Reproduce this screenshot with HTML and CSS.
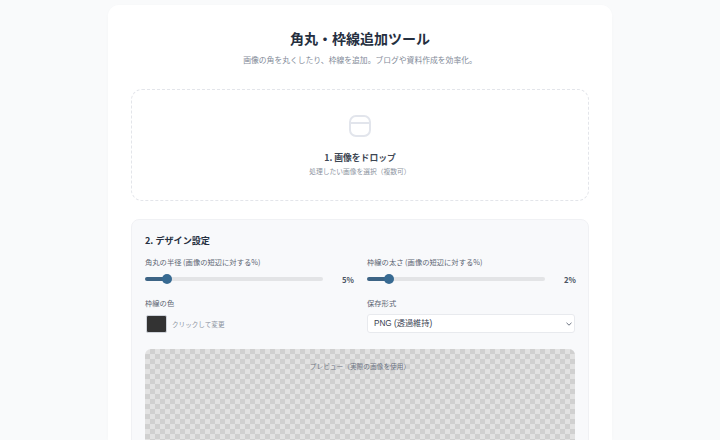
FILE: index.html
```html
<!DOCTYPE html>
<html lang="ja">
<head>
<meta charset="utf-8">
<title>角丸・枠線追加ツール</title>
<link rel="stylesheet" href="styles.css">
</head>
<body>
<main class="card">
  <header class="head">
    <h1 class="title">角丸・枠線追加ツール</h1>
    <p class="subtitle">画像の角を丸くしたり、枠線を追加。ブログや資料作成を効率化。</p>
  </header>
  <section class="drop">
    <svg class="drop-icon" width="24" height="24" viewBox="0 0 24 24" fill="none" stroke="#e2e5ec" stroke-width="2">
      <rect x="2" y="2" width="20" height="20" rx="6"/>
      <path d="M2 9h20"/>
    </svg>
    <h2 class="drop-title">1. 画像をドロップ</h2>
    <p class="drop-sub">処理したい画像を選択（複数可）</p>
  </section>
  <section class="panel">
    <h2 class="panel-title">2. デザイン設定</h2>
    <div class="grid">
      <div class="field">
        <label class="label">角丸の半径 (画像の短辺に対する%)</label>
        <div class="slider-row">
          <input class="range" type="range" min="0" max="50" value="5">
          <span class="value">5%</span>
        </div>
      </div>
      <div class="field">
        <label class="label">枠線の太さ (画像の短辺に対する%)</label>
        <div class="slider-row">
          <input class="range" type="range" min="0" max="20" value="2">
          <span class="value">2%</span>
        </div>
      </div>
      <div class="field">
        <label class="label">枠線の色</label>
        <div class="color-row">
          <span class="swatch"></span>
          <span class="hint">クリックして変更</span>
        </div>
      </div>
      <div class="field">
        <label class="label">保存形式</label>
        <div class="select-wrap">
          <select class="select"><option>PNG (透過維持)</option></select>
          <svg class="chevron" width="6" height="4" viewBox="0 0 6 4" fill="none" stroke="#6b7280" stroke-width="1"><path d="M.5.8 3 3.2 5.5.8"/></svg>
        </div>
      </div>
    </div>
    <div class="preview"><span class="preview-text">プレビュー（実際の画像を使用）</span></div>
  </section>
</main>
</body>
</html>
```
FILE: styles.css
```css
* { box-sizing: border-box; }
html, body { height: 440px; overflow: hidden; }
body {
  margin: 0;
  background: #f9fafb;
  font-family: "Noto Sans CJK JP", "Noto Sans", sans-serif;
  display: flex;
  justify-content: center;
  padding-top: 5px;
}
.card {
  width: 504px;
  height: 435px;
  overflow: hidden;
  flex: none;
  background: #fff;
  border-radius: 11px 11px 0 0;
  padding: 23px 23px 0;
  box-shadow: 0 1px 4px rgba(0, 0, 0, .02);
}
.head { text-align: center; height: 61px; }
.title { margin: 0; font-size: 14px; line-height: 21px; font-weight: 700; color: #252f3f; }
.subtitle { margin: 5px 0 0; font-size: 7.8px; line-height: 12px; color: #838b99; }
.drop {
  height: 112px;
  border: 1px dashed #e3e5ea;
  border-radius: 11px;
  display: flex;
  flex-direction: column;
  align-items: center;
  padding-top: 24px;
}
.drop-icon { display: block; }
.drop-title { margin: 13px 0 0; font-size: 8.8px; line-height: 14px; font-weight: 700; color: #3d4653; }
.drop-sub { margin: 1px 0 0; font-size: 6.75px; line-height: 11px; color: #8b93a0; }
.panel {
  margin-top: 18px;
  height: 300px;
  background: #f8f9fb;
  border: 1px solid #f0f1f4;
  border-radius: 8px;
  padding: 13px 13px 0;
}
.panel-title { margin: 0; font-size: 9.1px; line-height: 15px; font-weight: 700; color: #252f3f; }
.grid { display: grid; grid-template-columns: 209px 209px; column-gap: 13px; margin-top: 8px; }
.field { height: 41px; }
.label { display: block; font-size: 7.3px; line-height: 12px; color: #5b6472; }
.slider-row { display: flex; align-items: center; justify-content: space-between; margin-top: 5px; height: 12px; }
.range {
  -webkit-appearance: none;
  appearance: none;
  margin: 0;
  width: 178px;
  height: 4px;
  border-radius: 2px;
  background: linear-gradient(#3d6485, #3d6485) left / 21px 100% no-repeat, #e3e4e6;
}
.range::-webkit-slider-thumb {
  -webkit-appearance: none;
  width: 10px;
  height: 10px;
  border-radius: 50%;
  background: #376a92;
  border: 0;
}
.value { font-size: 7.7px; font-weight: 700; color: #4b5563; }
.color-row { display: flex; align-items: center; gap: 5px; margin: 6px 0 0 1px; }
.swatch { width: 21px; height: 18px; background: #333; border: 1px solid #cfd3da; border-radius: 2px; }
.hint { font-size: 6.6px; color: #8b93a0; }
.select-wrap { position: relative; width: 208px; margin-top: 5px; }
.select {
  -webkit-appearance: none;
  appearance: none;
  display: block;
  width: 208px;
  height: 19px;
  padding: 0 6px;
  background-color: #fff;
  border: 1px solid #e8eaee;
  border-radius: 3px;
  font-family: "Liberation Sans", "Noto Sans CJK JP", sans-serif;
  font-size: 8.2px;
  color: #374151;
}
.chevron { position: absolute; right: 3px; top: 8px; }
.preview {
  margin-top: 11px;
  height: 200px;
  width: 430px;
  border-radius: 6px;
  text-align: center;
  padding-top: 12px;
  background: repeating-conic-gradient(#d0d0d0 0 25%, #e2e2e2 0 50%) 0 0 / 10px 10px;
}
.preview-text { display: block; font-size: 6.7px; line-height: 11px; color: #6b7280; }
```
